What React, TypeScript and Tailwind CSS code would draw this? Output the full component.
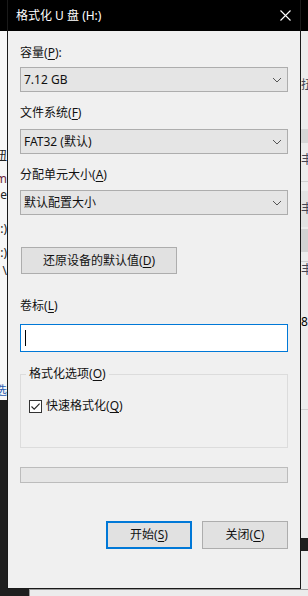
import React from "react";

const font = "font-['Noto_Sans','Noto_Sans_CJK_SC',sans-serif]";

function Key({ k }: { k: string }) {
  return (
    <>
      (<span className="underline underline-offset-2">{k}</span>)
    </>
  );
}

function Chevron() {
  return (
    <svg width="10" height="6" viewBox="0 0 10 6" className="shrink-0">
      <path d="M1 1 L5 5 L9 1" fill="none" stroke="#555" strokeWidth="1" />
    </svg>
  );
}

function Combo({ children }: { children: React.ReactNode }) {
  return (
    <div className="flex h-[25px] items-center justify-between border border-[#adadad] bg-[#e5e5e5] pl-[3px] pr-[5px] text-[12px] leading-[16px] text-[#111]">
      <span>{children}</span>
      <Chevron />
    </div>
  );
}

function Label({ children, mt }: { children: React.ReactNode; mt: string }) {
  return <div className={`${mt} h-[16px] text-[12px] leading-[16px] text-[#111]`}>{children}</div>;
}

export default function App() {
  return (
    <div className={`relative h-[596px] w-[308px] overflow-hidden bg-[#e9e9e9] ${font}`}>
      {/* window behind the dialog */}
      <div className="absolute left-0 top-0 h-[31px] w-[308px] bg-black" />
      <div className="absolute left-0 top-[31px] flex h-[369px] w-[7px] flex-col items-end overflow-hidden bg-[#f7f7f7] text-[12px] leading-[16px]">
        <div className="h-[117px] shrink-0" />
        <div className="whitespace-nowrap text-[#222]">扭</div>
        <div className="h-[7px] shrink-0" />
        <div className="whitespace-nowrap text-[#6b1f3a]">m</div>
        <div className="whitespace-nowrap text-[#222]">e</div>
        <div className="h-[18px] shrink-0" />
        <div className="whitespace-nowrap text-[#222]">:)</div>
        <div className="h-[8px] shrink-0" />
        <div className="whitespace-nowrap text-[#222]">:)</div>
        <div className="h-[2px] shrink-0" />
        <div className="whitespace-nowrap text-[#222]">\</div>
        <div className="h-[104px] shrink-0" />
        <div className="whitespace-nowrap text-[#2a5db0]">选</div>
      </div>
      <div className="absolute left-0 top-[400px] h-[196px] w-[29px] bg-[#1f1f1f]" />
      <div className="absolute left-[29px] top-[589px] h-[7px] w-[279px] border-l border-t border-[#9a9a9a] bg-[#ececec]" />
      <div className="absolute left-[301px] top-[31px] flex h-[558px] w-[7px] flex-col overflow-hidden bg-[#ececec] text-[12px] leading-[16px] text-[#445]">
        <div className="h-[46px] shrink-0" />
        <div className="shrink-0">扭</div>
        <div className="h-[36px] shrink-0" />
        <div className="h-[14px] shrink-0 bg-[#d6d6d6]" />
        <div className="h-[9px] shrink-0" />
        <div className="shrink-0">丰</div>
        <div className="h-[14px] shrink-0 border-b border-[#cfcfcf]" />
        <div className="h-[9px] shrink-0" />
        <div className="flex h-[36px] shrink-0 items-center bg-[#e2e2e2]">丰</div>
        <div className="h-[2px] shrink-0" />
        <div className="h-[23px] shrink-0 bg-[#d2d2d2]" />
        <div className="h-[10px] shrink-0 border-b border-[#cfcfcf]" />
        <div className="shrink-0">丰</div>
        <div className="h-[36px] shrink-0" />
        <div className="shrink-0 text-black">8.</div>
        <div className="h-[80px] shrink-0 border-b border-[#cfcfcf]" />
        <div className="h-[128px] shrink-0" />
        <div className="h-[13px] shrink-0 bg-[#1f1f1f]" />
      </div>

      {/* dialog */}
      <div className="absolute left-[7px] top-0 flex h-[589px] w-[294px] flex-col border-x border-b border-[#1a1a1a] bg-[#f0f0f0]">
        <div className="flex h-[31px] shrink-0 items-center justify-between bg-black pl-[8px] pr-[9px] text-[12px] leading-[16px] text-white">
          <span className="whitespace-pre">格式化 U 盘 (H:)</span>
          <svg width="11" height="11" viewBox="0 0 11 11">
            <path d="M0.5 0.5 L10.5 10.5 M10.5 0.5 L0.5 10.5" stroke="white" strokeWidth="1.1" />
          </svg>
        </div>

        <div className="flex flex-col px-[12px]">
          <Label mt="mt-[14px]">
            容量<Key k="P" />:
          </Label>
          <div className="mt-[6px]">
            <Combo>7.12 GB</Combo>
          </div>

          <Label mt="mt-[13px]">
            文件系统<Key k="F" />
          </Label>
          <div className="mt-[8px]">
            <Combo>FAT32 (默认)</Combo>
          </div>

          <Label mt="mt-[13px]">
            分配单元大小<Key k="A" />
          </Label>
          <div className="mt-[7px]">
            <Combo>默认配置大小</Combo>
          </div>

          <button className="ml-px mt-[32px] flex h-[27px] w-[156px] items-center justify-center border border-[#adadad] bg-[#e1e1e1] text-[12px] leading-[16px] text-[#111]">
            还原设备的默认值<Key k="D" />
          </button>

          <Label mt="mt-[24px]">
            卷标<Key k="L" />
          </Label>
          <div className="mt-[10px] flex h-[28px] items-center border border-[#0078d7] bg-white pl-[4px]">
            <div className="h-[16px] w-px bg-black" />
          </div>

          <div className="relative mt-[22px] h-[74px] border border-[#dcdcdc] px-[8px] pt-[23px]">
            <div className="absolute -top-[9px] left-[5px] bg-[#f0f0f0] px-[3px] text-[12px] leading-[16px] text-[#111]">
              格式化选项<Key k="O" />
            </div>
            <div className="flex items-center gap-[4px] text-[12px] leading-[16px] text-[#111]">
              <div className="flex h-[13px] w-[13px] items-center justify-center border border-[#333] bg-white">
                <svg width="11" height="11" viewBox="0 0 11 11">
                  <path d="M1.5 5.5 L4.2 8.2 L9.6 2.6" fill="none" stroke="#222" strokeWidth="1.1" />
                </svg>
              </div>
              <span>
                快速格式化<Key k="Q" />
              </span>
            </div>
          </div>

          <div className="mt-[19px] h-[16px] border border-[#bcbcbc] bg-[#e6e6e6]" />

          <div className="mt-[38px] flex justify-end gap-[10px]">
            <button className="flex h-[28px] w-[86px] items-center justify-center border-2 border-[#0078d7] bg-[#e1e1e1] text-[12px] leading-[16px] text-[#111]">
              开始<Key k="S" />
            </button>
            <button className="flex h-[28px] w-[86px] items-center justify-center border border-[#adadad] bg-[#e1e1e1] text-[12px] leading-[16px] text-[#111]">
              关闭<Key k="C" />
            </button>
          </div>
        </div>
      </div>
    </div>
  );
}
